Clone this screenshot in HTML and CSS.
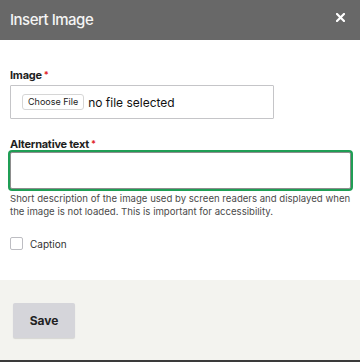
FILE: index.html
```html
<!DOCTYPE html>
<html lang="en">
<head>
  <meta charset="UTF-8" />
  <meta name="viewport" content="width=device-width, initial-scale=1.0"/>
  <title>Insert Image</title>
  <link rel="stylesheet" href="styles.css">
</head>
<body>
  <div id="dialog">
    <div id="titlebar">
      <span class="title">Insert Image</span>
      <button class="close" aria-label="Close">
        <svg width="9" height="9" viewBox="0 0 9 9"><path d="M1 1 L8 8 M8 1 L1 8" stroke="#fff" stroke-width="2.2" stroke-linecap="square"/></svg>
      </button>
    </div>

    <div id="content">
      <label class="field-label">Image<span class="req">*</span></label>
      <div class="file-box">
        <span class="file-btn">Choose File</span>
        <span class="file-name">no file selected</span>
      </div>

      <label class="field-label alt-label">Alternative text<span class="req">*</span></label>
      <input type="text" class="text-input" />
      <div class="help">Short description of the image used by screen readers and displayed when the image is not loaded. This is important for accessibility.</div>

      <label class="check-row">
        <span class="checkbox"></span>
        <span>Caption</span>
      </label>
    </div>

    <div id="footer">
      <button class="save">Save</button>
    </div>
  </div>
  <div id="underlay"></div>
</body>
</html>
```

FILE: styles.css
```css
body { font-family: Inter, "Noto Sans", sans-serif; margin: 0; padding: 0; background: #fff; color: #222; }

#titlebar {
  height: 40px; background-color: #686868; color: #f4f4f4;
  display: flex; align-items: center; justify-content: space-between;
  padding: 0 10px; box-sizing: border-box;
}
#titlebar .title { font-size: 15px; font-weight: 500; letter-spacing: -0.5px; margin-top: -2px; }
#titlebar .close {
  background: none; border: 0; padding: 0; margin: -6px 5px 0 0; cursor: pointer;
  display: flex;
}

#content { padding: 28px 9px 0 10px; height: 240px; box-sizing: border-box; }

.field-label { display: block; font-size: 11px; font-weight: 700; line-height: 14px; letter-spacing: -0.25px; color: #1e1e1e; }
.req { color: #e0252a; margin-left: 2px; font-size: 9px; vertical-align: 1px; }

.file-box {
  margin-top: 3px; width: 264px; height: 34px; box-sizing: border-box;
  border: 1px solid #c5c5c8; border-radius: 1px;
  display: flex; align-items: center; padding-left: 11px;
}
.file-btn {
  font-size: 9px; color: #222; background: #fff;
  border: 1px solid #d6d6d6; border-radius: 3px;
  padding: 1px 5px; line-height: 12px;
}
.file-name { font-size: 12px; margin-left: 4px; color: #111; }

.alt-label { margin-top: 18px; }

.text-input {
  display: block; margin: 1px 0 0 0; width: 341px; height: 37px; box-sizing: border-box;
  border: 1px solid #8d8d8d; border-radius: 2px; outline: none;
  box-shadow: 0 0 0 2px #1f9e55;
}

.help { font-size: 9.6px; line-height: 13px; color: #4a4a4a; margin-top: 3px; }

.check-row { display: flex; align-items: center; margin-top: 19px; font-size: 10px; color: #333; }
.checkbox {
  width: 13px; height: 13px; box-sizing: border-box;
  border: 1px solid #bdbdc2; border-radius: 2px; margin-right: 7px;
}

#footer { background-color: #f3f3ef; height: 80px; padding: 23px 13px 0; box-sizing: border-box; }
.save {
  width: 62px; height: 35px; background: #d5d5da; border: 0; border-radius: 2px;
  font-family: inherit; font-size: 12px; font-weight: 700; color: #222;
  box-shadow: 0 1px 1px rgba(0,0,0,0.12);
}

#underlay { height: 2px; background: #3a3a3a; }
```
